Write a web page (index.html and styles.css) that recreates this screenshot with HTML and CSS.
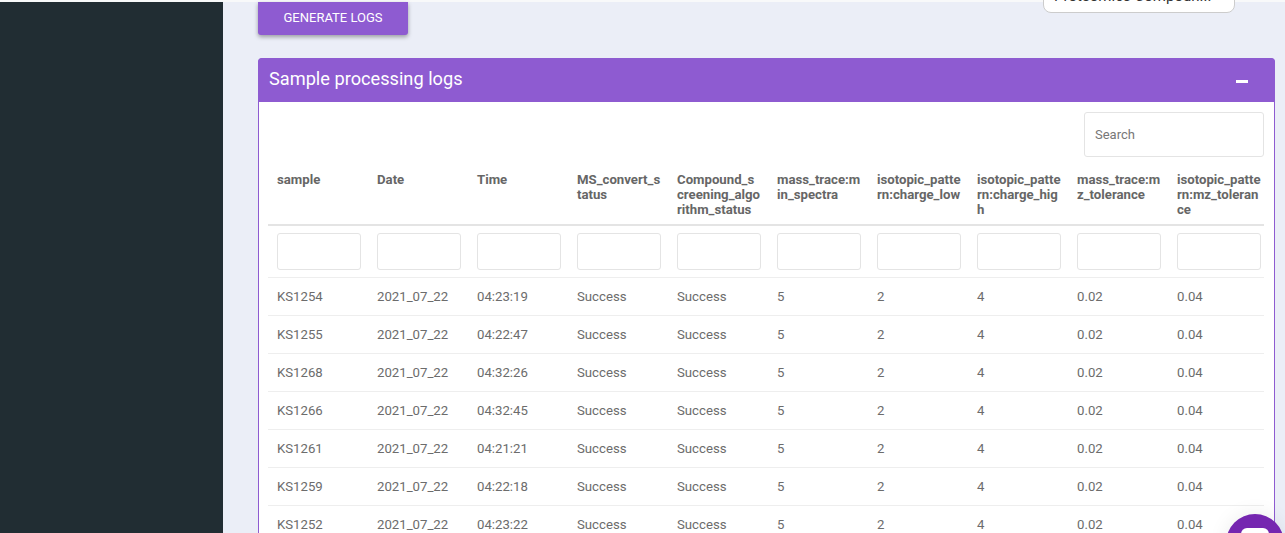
FILE: index.html
```html
<!DOCTYPE html>
<html lang="en">
<head>
    <meta charset="UTF-8">
    <meta name="viewport" content="width=device-width, initial-scale=1.0">
    <title>Sample processing logs</title>
    <link rel="stylesheet" href="styles.css">
</head>
<body>
    <div class="topline"></div>
    <div class="layout">
        <aside class="sidebar"></aside>
        <main class="content">
            <div class="actions">
                <button class="btn-generate" type="button">Generate logs</button>
                <div class="picker">Proteomics Compoun...</div>
            </div>

            <section class="card">
                <div class="card-header">
                    <h2>Sample processing logs</h2>
                    <span class="collapse-icon"></span>
                </div>
                <div class="card-body">
                    <div class="search-row">
                        <input class="search" type="text" placeholder="Search">
                    </div>
                    <table class="logs">
                        <thead>
                            <tr class="head-row">
                                <th>sample</th>
                                <th>Date</th>
                                <th>Time</th>
                                <th>MS_convert_status</th>
                                <th>Compound_screening_algorithm_status</th>
                                <th>mass_trace:min_spectra</th>
                                <th>isotopic_pattern:charge_low</th>
                                <th>isotopic_pattern:charge_high</th>
                                <th>mass_trace:mz_tolerance</th>
                                <th>isotopic_pattern:mz_tolerance</th>
                            </tr>
                            <tr class="filter-row">
                                <td><input type="text"></td>
                                <td><input type="text"></td>
                                <td><input type="text"></td>
                                <td><input type="text"></td>
                                <td><input type="text"></td>
                                <td><input type="text"></td>
                                <td><input type="text"></td>
                                <td><input type="text"></td>
                                <td><input type="text"></td>
                                <td><input type="text"></td>
                            </tr>
                        </thead>
                        <tbody>
                            <tr><td>KS1254</td><td>2021_07_22</td><td>04:23:19</td><td>Success</td><td>Success</td><td>5</td><td>2</td><td>4</td><td>0.02</td><td>0.04</td></tr>
                            <tr><td>KS1255</td><td>2021_07_22</td><td>04:22:47</td><td>Success</td><td>Success</td><td>5</td><td>2</td><td>4</td><td>0.02</td><td>0.04</td></tr>
                            <tr><td>KS1268</td><td>2021_07_22</td><td>04:32:26</td><td>Success</td><td>Success</td><td>5</td><td>2</td><td>4</td><td>0.02</td><td>0.04</td></tr>
                            <tr><td>KS1266</td><td>2021_07_22</td><td>04:32:45</td><td>Success</td><td>Success</td><td>5</td><td>2</td><td>4</td><td>0.02</td><td>0.04</td></tr>
                            <tr><td>KS1261</td><td>2021_07_22</td><td>04:21:21</td><td>Success</td><td>Success</td><td>5</td><td>2</td><td>4</td><td>0.02</td><td>0.04</td></tr>
                            <tr><td>KS1259</td><td>2021_07_22</td><td>04:22:18</td><td>Success</td><td>Success</td><td>5</td><td>2</td><td>4</td><td>0.02</td><td>0.04</td></tr>
                            <tr><td>KS1252</td><td>2021_07_22</td><td>04:23:22</td><td>Success</td><td>Success</td><td>5</td><td>2</td><td>4</td><td>0.02</td><td>0.04</td></tr>
                        </tbody>
                    </table>
                </div>
            </section>
        </main>
    </div>
    <div class="chat-bubble"><span class="chat-glyph"></span></div>
</body>
</html>
```

FILE: styles.css
```css
html, body {
    height: 533px;
    overflow: hidden;
}
body {
    margin: 0;
    padding: 0;
    font-family: Roboto, "Liberation Sans", sans-serif;
    font-size: 13.2px;
    color: #666;
    background-color: #ebeef7;
}
.topline {
    height: 2px;
    background: #f8f9fa;
}
.layout {
    display: flex;
    height: 531px;
    position: relative;
}
.sidebar {
    width: 223px;
    flex-shrink: 0;
    background: #212d33;
}
.content {
    flex: 1;
    padding: 0 10px 0 35px;
}
.actions {
    display: flex;
    justify-content: space-between;
    align-items: flex-start;
    height: 56px;
}
.btn-generate {
    width: 150px;
    height: 33px;
    padding: 0 0 2px;
    border: 0;
    border-radius: 0 0 3px 3px;
    background: #8e5bd1;
    color: #fff;
    font-family: inherit;
    font-size: 13px;
    text-transform: uppercase;
    box-shadow: 0 2px 4px rgba(0, 0, 0, 0.35);
}
.picker {
    width: 192px;
    height: 32px;
    box-sizing: border-box;
    margin: -21px 40px 0 0;
    padding-left: 10px;
    border: 1px solid #ccc;
    border-radius: 8px;
    background: #fff;
    color: #333;
    font-size: 15px;
    line-height: 29px;
    white-space: nowrap;
}
.card {
    background: #fff;
    border: 1px solid #8e5bd1;
    border-radius: 4px 4px 0 0;
}
.card-header {
    display: flex;
    justify-content: space-between;
    align-items: center;
    box-sizing: border-box;
    height: 44px;
    margin: -1px -1px 0;
    padding: 0 27px 3px 11px;
    background: #8e5bd1;
    border-radius: 4px 4px 0 0;
}
.card-header h2 {
    margin: 0;
    font-size: 18.2px;
    font-weight: 400;
    color: #fff;
}
.collapse-icon {
    width: 12px;
    height: 3px;
    margin-top: 6px;
    background: #fff;
}
.card-body {
    padding: 10px 10px 0 9px;
}
.search-row {
    display: flex;
    justify-content: flex-end;
}
.search {
    width: 180px;
    height: 45px;
    box-sizing: border-box;
    padding: 0 10px;
    border: 1px solid #e4e4e4;
    border-radius: 3px;
    font-family: inherit;
    font-size: 13px;
}
.search::placeholder {
    color: #777;
}
.logs {
    width: 996px;
    table-layout: fixed;
    border-collapse: separate;
    border-spacing: 0;
}
.logs th {
    height: 45px;
    padding: 15px 7px 7px 9px;
    border-bottom: 2px solid #e4e4e4;
    font-weight: 700;
    line-height: 15px;
    text-align: left;
    vertical-align: top;
    word-break: break-all;
}
.logs th, .logs td {
    width: 84px;
}
.logs td {
    height: 37px;
    padding: 0 7px 0 9px;
    border-bottom: 1px solid #eee;
    color: #6c6c6c;
}
.logs th:last-child, .logs td:last-child {
    padding-right: 3px;
}
.logs .filter-row td {
    padding-top: 7px;
    padding-bottom: 7px;
}
.filter-row input {
    display: block;
    width: 84px;
    height: 37px;
    box-sizing: border-box;
    border: 1px solid #e4e4e4;
    border-radius: 3px;
}
.chat-bubble {
    position: fixed;
    left: 1226px;
    top: 514px;
    width: 58px;
    height: 58px;
    border-radius: 50%;
    background: #7526b0;
    box-shadow: 0 0 20px rgba(0, 0, 0, 0.08);
}
.chat-glyph {
    position: absolute;
    left: 15px;
    top: 14px;
    width: 28px;
    height: 22px;
    border-radius: 6px;
    background: #fff;
}
```
